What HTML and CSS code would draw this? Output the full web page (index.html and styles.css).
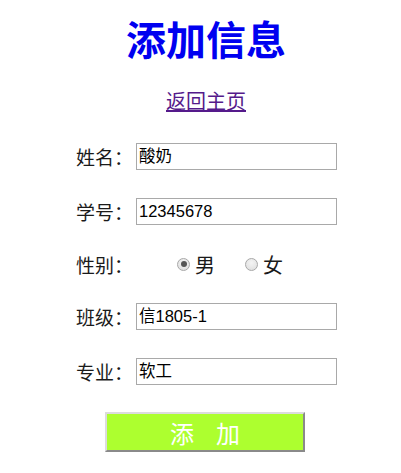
FILE: index.html
```html
<!DOCTYPE html>
<html lang="zh-CN">
<head>
<meta charset="utf-8">
<title>添加信息</title>
<link rel="stylesheet" href="styles.css">
</head>
<body>
<div class="page">
  <h1 class="title">添加信息</h1>
  <div class="back"><a href="#" class="back-link">返回主页</a></div>
  <form class="form">
    <div class="row">
      <span class="label">姓名：</span>
      <span class="input">酸奶</span>
    </div>
    <div class="row">
      <span class="label">学号：</span>
      <span class="input">12345678</span>
    </div>
    <div class="row row-short">
      <span class="label">性别：</span>
      <span class="radios">
        <span class="radio-item"><span class="radio checked"></span><span class="radio-text">男</span></span>
        <span class="radio-item"><span class="radio"></span><span class="radio-text">女</span></span>
      </span>
    </div>
    <div class="row">
      <span class="label">班级：</span>
      <span class="input">信1805-1</span>
    </div>
    <div class="row">
      <span class="label">专业：</span>
      <span class="input">软工</span>
    </div>
    <div class="btn-row">
      <button type="button" class="btn"><span>添</span><span>加</span></button>
    </div>
  </form>
</div>
</body>
</html>
```

FILE: styles.css
```css
html, body {
  margin: 0;
  padding: 0;
  background: #ffffff;
}

body {
  font-family: "Noto Sans CJK SC", "Liberation Sans", sans-serif;
  color: #1a1a1a;
}

.page {
  width: 262px;
  margin-left: 75px;
  padding-top: 12px;
}

.title {
  margin: 0;
  text-align: center;
  font-size: 40px;
  line-height: 52px;
  font-weight: 700;
  color: #0000f0;
}

.back {
  margin-top: 24px;
  text-align: center;
  font-size: 20px;
  line-height: 26px;
}

.back-link {
  color: #551a8b;
  text-decoration: underline;
}

.form {
  margin-top: 15px;
  display: flex;
  flex-direction: column;
}

.row {
  display: flex;
  align-items: center;
  height: 55px;
}

.row-short {
  height: 50px;
}

.label {
  width: 61px;
  flex: none;
  font-size: 19px;
  line-height: 27px;
  padding-left: 1px;
  box-sizing: border-box;
  color: #1a1a1a;
}

.input {
  width: 201px;
  height: 27px;
  box-sizing: border-box;
  border: 1px solid #a9a9a9;
  font-family: "Liberation Sans", "Noto Sans CJK SC", sans-serif;
  font-size: 16.5px;
  line-height: 25px;
  padding-left: 2px;
  color: #000;
  background: #fff;
}

.radios {
  display: flex;
  align-items: center;
  padding-left: 41px;
  gap: 30px;
}

.radio-item {
  display: flex;
  align-items: center;
  gap: 5px;
}

.radio {
  width: 13px;
  height: 13px;
  box-sizing: border-box;
  border-radius: 50%;
  border: 1px solid #a8a8a8;
  background: radial-gradient(circle at 50% 35%, #f4f4f4 0%, #dcdcdc 100%);
  position: relative;
}

.radio.checked::after {
  content: "";
  position: absolute;
  left: 2.5px;
  top: 2.5px;
  width: 6px;
  height: 6px;
  border-radius: 50%;
  background: #555;
}

.radio-text {
  font-size: 20px;
  line-height: 27px;
  color: #1a1a1a;
}

.btn-row {
  display: flex;
  padding-left: 30px;
  margin-top: 13px;
}

.btn {
  width: 200px;
  height: 40px;
  box-sizing: border-box;
  background: #adff2f;
  border: 2px solid;
  border-color: #dcdcdc #8a8a8a #8a8a8a #dcdcdc;
  padding: 0;
  display: flex;
  justify-content: center;
  align-items: center;
  gap: 22px;
  font-family: "Noto Sans CJK SC", sans-serif;
  font-size: 24px;
  color: #ffffff;
  cursor: pointer;
}
```
